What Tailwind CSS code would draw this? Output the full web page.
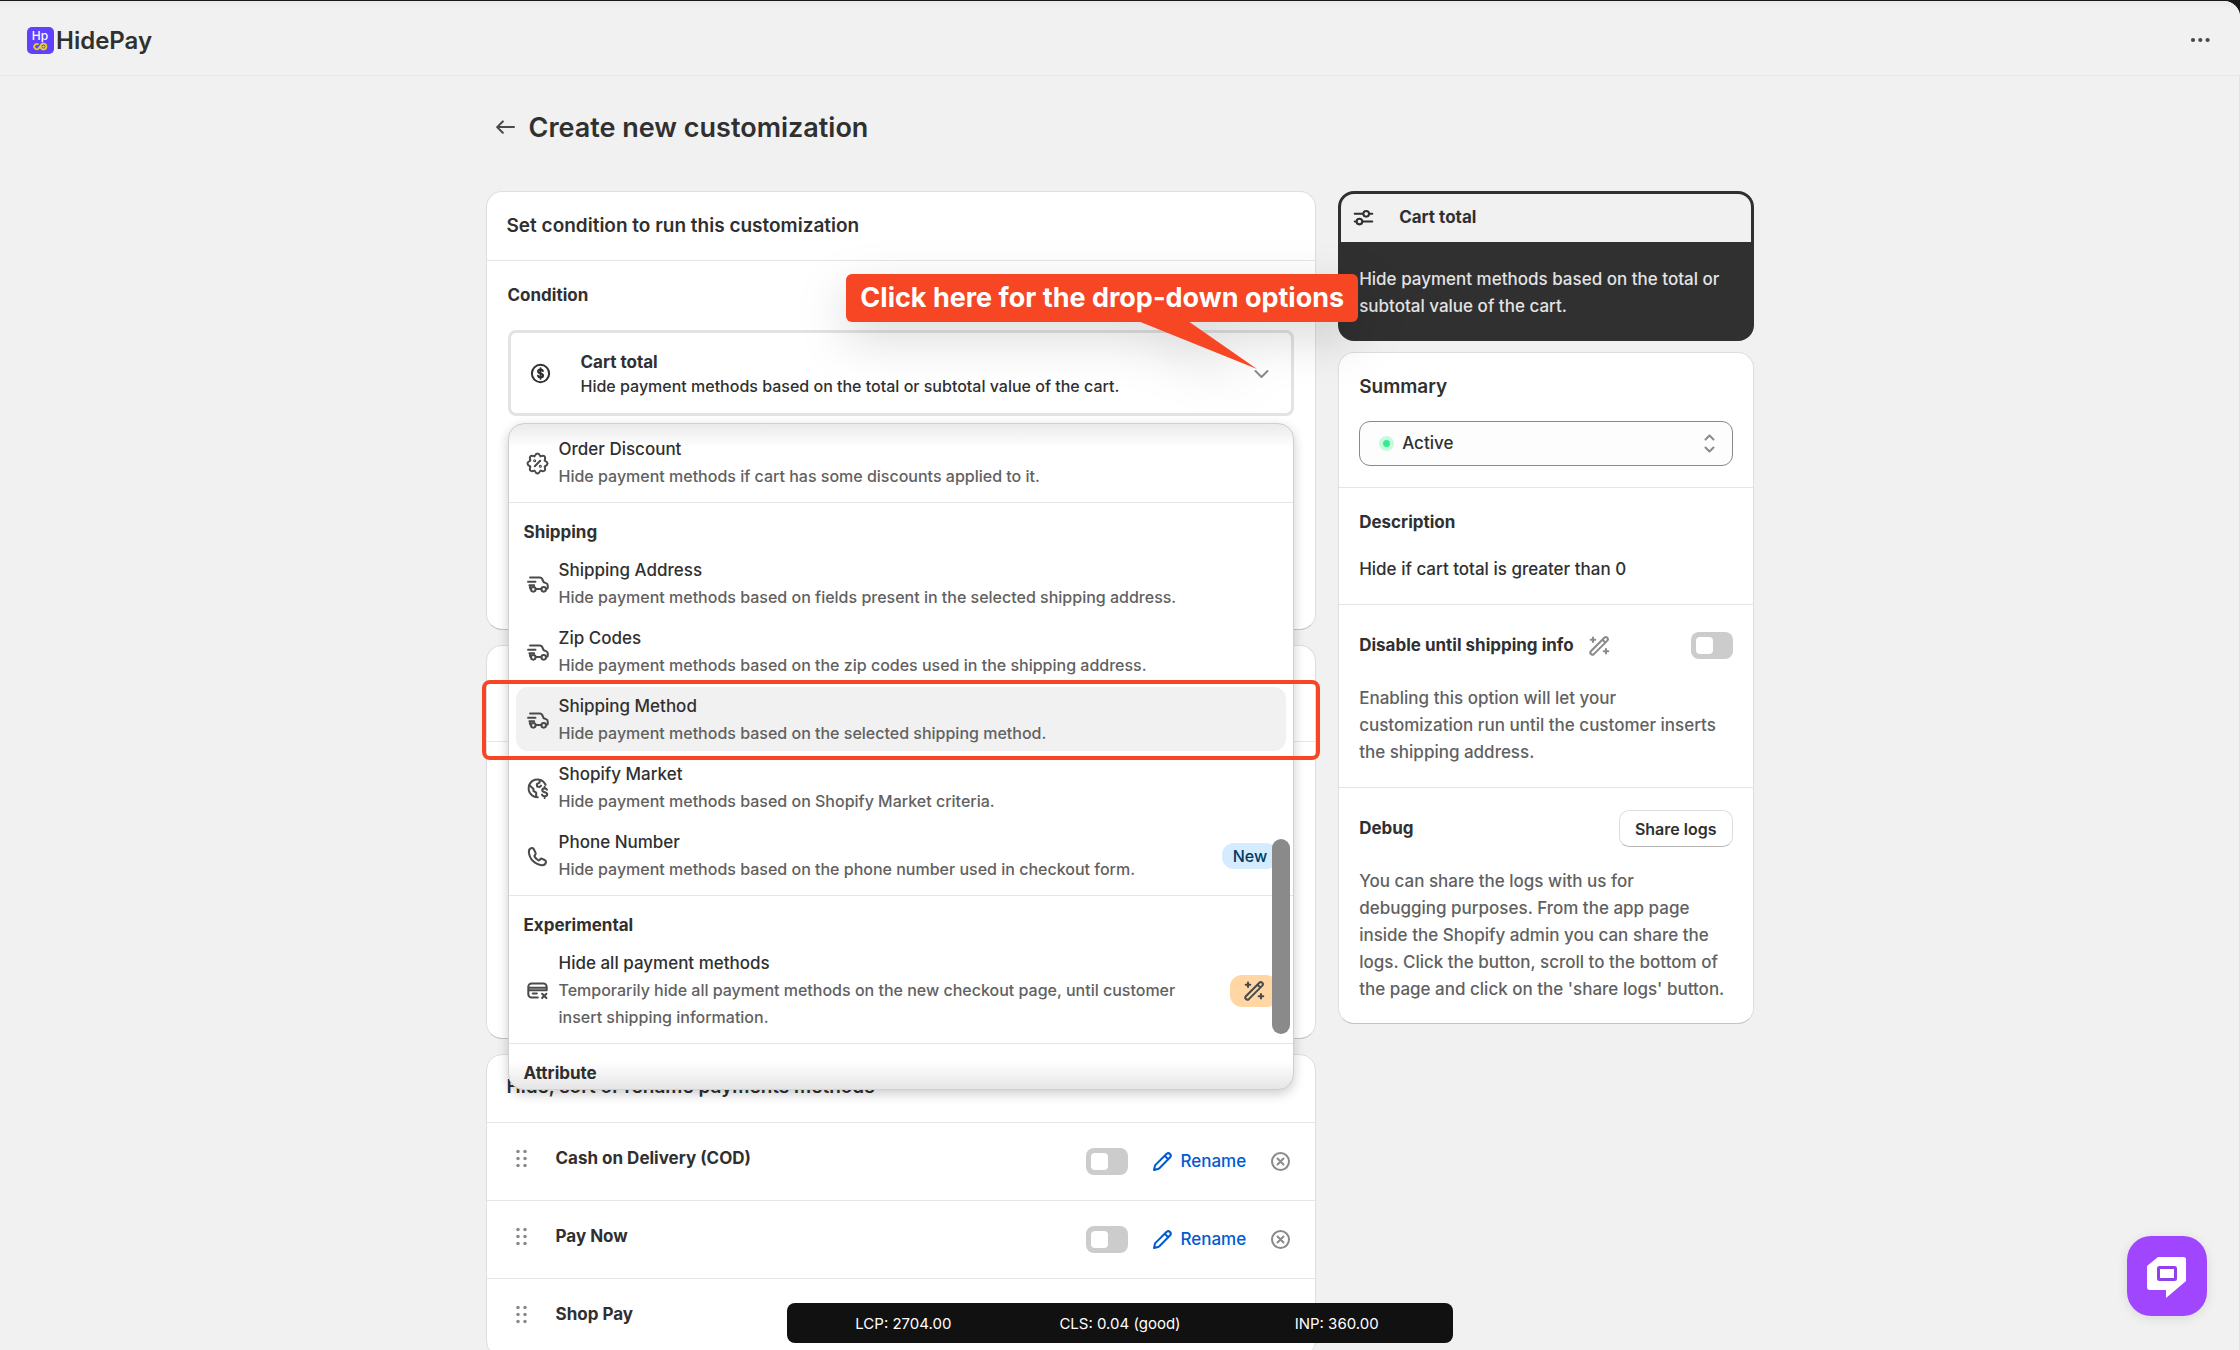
<!DOCTYPE html>
<html lang="en">
<head>
    <meta charset="UTF-8">
    <meta name="viewport" content="width=device-width, initial-scale=1.0">
    <title>HidePay - Create new customization</title>
    <script src="https://cdn.jsdelivr.net/npm/@tailwindcss/browser@4"></script>
</head>
<body class="bg-[#1a1a1a] font-['Inter',sans-serif] text-[#303030] text-[17px] leading-[27px] font-medium">
    <!-- shared icons -->
    <svg class="hidden" fill="none">
        <symbol id="i-truck" viewBox="0 0 20 20"><g fill="none" stroke="currentColor" stroke-width="1.5" stroke-linecap="round" stroke-linejoin="round"><path d="M4.5 4.75h7.3c.7 0 1.3.4 1.6 1l1.2 2.6 1.7.6c.8.3 1.3 1 1.3 1.8v1.2c0 .8-.5 1.3-1.2 1.3M3 7.9h5.5M4 10.6h3.5M4.4 10.8v1.5c0 .6.3 1 .7 1M8.6 13.4h4.3"/><circle cx="6.9" cy="13.6" r="1.7"/><circle cx="14.6" cy="13.6" r="1.7"/></g></symbol>
        <symbol id="i-wand" viewBox="0 0 20 20"><g fill="none" stroke="currentColor" stroke-width="1.5" stroke-linecap="round" stroke-linejoin="round"><path d="M3.6 14.2 13.6 4.2a1.56 1.56 0 0 1 2.2 2.2L5.8 16.4a1.56 1.56 0 0 1-2.2-2.2ZM12.2 5.7l2.1 2.1"/><path d="M5.2 4v3.4M3.5 5.7h3.4M14.8 12.6V16M13.1 14.3h3.4"/></g></symbol>
        <symbol id="i-pencil" viewBox="0 0 20 20"><g fill="none" stroke="currentColor" stroke-width="1.5" stroke-linecap="round" stroke-linejoin="round"><path d="M13.1 4.3a1.85 1.85 0 0 1 2.6 2.6l-8 8.1c-.3.3-.6.4-1 .5l-3 .8.7-3c.1-.4.3-.7.6-1ZM11.6 5.8l2.6 2.6"/></g></symbol>
        <symbol id="i-remove" viewBox="0 0 20 20"><g fill="none" stroke="currentColor" stroke-width="1.5" stroke-linecap="round"><circle cx="10" cy="10" r="6.3"/><path d="m7.8 7.8 4.4 4.4M12.2 7.8l-4.4 4.4"/></g></symbol>
        <symbol id="i-drag" viewBox="0 0 20 20"><g fill="currentColor"><circle cx="7.4" cy="4.8" r="1.3"/><circle cx="12.6" cy="4.8" r="1.3"/><circle cx="7.4" cy="10" r="1.3"/><circle cx="12.6" cy="10" r="1.3"/><circle cx="7.4" cy="15.2" r="1.3"/><circle cx="12.6" cy="15.2" r="1.3"/></g></symbol>
    </svg>

    <div class="mt-px flex h-[calc(100vh-1px)] flex-col overflow-hidden rounded-tr-2xl bg-[#f1f1f1]">
        <header class="flex h-[75px] shrink-0 items-center justify-between border-b border-[#e8e8e8] bg-linear-to-b from-[#ebe9ea] to-[#f1f1f1] to-10% pl-[27px] pr-[26px] pt-[5px]">
            <div class="flex items-center gap-[2px]">
                <svg class="size-[27px]" viewBox="0 0 27 27">
                    <rect width="27" height="27" rx="5" fill="#5f41ff"/>
                    <text x="13" y="13" text-anchor="middle" font-family="Inter, sans-serif" font-size="12" font-weight="500" fill="#fff">Hp</text>
                    <g fill="none" stroke="#e8cf2e" stroke-width="1.8"><path d="M11.500 17.600a2.600 2.600 0 1 0 0 4l2.500-3.400"/><circle cx="16.500" cy="19.600" r="2.900"/></g>
                    <circle cx="16.500" cy="19.600" r="1.200" fill="#e8cf2e"/>
                </svg>
                <span class="text-2xl font-semibold">HidePay</span>
            </div>
            <button type="button" aria-label="More actions" class="text-[#4a4a4a]">
                <svg class="size-[27px]" viewBox="0 0 27 27" fill="currentColor"><circle cx="6" cy="13" r="2.1"/><circle cx="13.3" cy="13" r="2.1"/><circle cx="20.6" cy="13" r="2.1"/></svg>
            </button>
        </header>

        <main class="grow border-r border-[#e3e3e3] pt-8">
            <div class="mx-auto max-w-[1268px]">
                <div class="mb-[45px] flex h-[38px] items-center gap-2.5 pl-1.5">
                    <a href="#" aria-label="Back" class="text-[#4a4a4a]">
                        <svg class="size-[27px]" viewBox="0 0 20 20" fill="none" stroke="currentColor" stroke-width="1.5" stroke-linecap="round" stroke-linejoin="round"><path d="M16.3 9.7H4M8 5.5 3.8 9.7 8 13.9"/></svg>
                    </a>
                    <h1 class="text-[27px] font-semibold">Create new customization</h1>
                </div>

                <div class="grid grid-cols-[2fr_1fr] items-start gap-[22px]">
                    <div class="flex flex-col gap-[15px]">
                        <!-- condition -->
                        <section class="min-h-[439px] rounded-2xl border border-[#dedede] border-b-[#c4c4c4] bg-white">
                            <h2 class="flex h-[69px] items-center border-b border-[#e6e6e6] px-5 pb-[2px] text-[19px] font-semibold">Set condition to run this customization</h2>
                            <div class="px-[21px] py-[21px]">
                                <h3 class="mb-[21px] font-bold">Condition</h3>
                                <div class="relative">
                                    <button type="button" aria-haspopup="listbox" aria-expanded="true" class="flex h-[86px] w-full items-center rounded-lg border-3 border-[#e3e3e3] bg-white pl-4 pr-[16px] text-left">
                                        <svg class="size-[27px]" viewBox="0 0 20 20" fill="none" stroke="currentColor" stroke-width="1.5" stroke-linecap="round" stroke-linejoin="round"><circle cx="10" cy="10" r="6.4"/><path d="M11.8 8.2c-.2-.7-.9-1.1-1.8-1.1-1 0-1.8.5-1.8 1.4 0 2 3.7.9 3.7 2.9 0 .9-.8 1.5-1.9 1.5-1 0-1.7-.5-1.9-1.3M10 6.2v7.6"/></svg>
                                        <span class="ml-[27px] flex grow flex-col pt-[2px]">
                                            <span class="leading-6 font-bold">Cart total</span>
                                            <span class="text-base leading-6">Hide payment methods based on the total or subtotal value of the cart.</span>
                                        </span>
                                        <svg class="size-[27px] text-[#8a8a8a]" viewBox="0 0 27 27" fill="none" stroke="currentColor" stroke-width="2" stroke-linecap="round" stroke-linejoin="round"><path d="m7.5 11 6 6 6-6"/></svg>
                                    </button>

                                    <div class="absolute inset-x-0 top-[93px] z-10">
                                        <div role="listbox" aria-label="Condition" class="h-[667px] overflow-hidden rounded-2xl border border-[#cfcfcf] bg-white shadow-[0_4px_12px_rgba(0,0,0,0.2)]">
                                            <div class="border-b border-[#e6e6e6] px-[7px] pt-1.5 pb-2">
                                                <div role="option" class="flex min-h-16 items-center gap-2 rounded-xl px-2 pt-1.5 pb-1">
                                                    <svg class="size-[27px] shrink-0 text-[#4a4a4a]" viewBox="0 0 20 20" fill="none" stroke="currentColor" stroke-width="1.5" stroke-linecap="round" stroke-linejoin="round"><path d="M15.3 7.8Q19.600 10 15.3 12.2 16.8 16.8 12.2 15.3 10 19.600 7.8 15.3 3.2 16.8 4.700 12.2 .4 10 4.700 7.8 3.2 3.2 7.8 4.700 10 .4 12.2 4.700 16.8 3.2 15.3 7.8Z"/><path d="m8 12 4-4"/><circle cx="7.9" cy="8" r=".4"/><circle cx="12.1" cy="12" r=".4"/></svg>
                                                    <div>
                                                        <p>Order Discount</p>
                                                        <p class="text-base leading-[27px] text-[#616161]">Hide payment methods if cart has some discounts applied to it.</p>
                                                    </div>
                                                </div>
                                            </div>
                                            <div class="flex flex-col gap-1 border-b border-[#e6e6e6] px-[7px] pt-4 pb-2">
                                                <h4 class="mb-px px-2 font-bold">Shipping</h4>
                                                <div role="option" class="flex min-h-16 items-center gap-2 rounded-xl px-2 pt-1.5 pb-1">
                                                    <svg class="size-[27px] shrink-0 text-[#4a4a4a]"><use href="#i-truck"/></svg>
                                                    <div>
                                                        <p>Shipping Address</p>
                                                        <p class="text-base leading-[27px] text-[#616161]">Hide payment methods based on fields present in the selected shipping address.</p>
                                                    </div>
                                                </div>
                                                <div role="option" class="flex min-h-16 items-center gap-2 rounded-xl px-2 pt-1.5 pb-1">
                                                    <svg class="size-[27px] shrink-0 text-[#4a4a4a]"><use href="#i-truck"/></svg>
                                                    <div>
                                                        <p>Zip Codes</p>
                                                        <p class="text-base leading-[27px] text-[#616161]">Hide payment methods based on the zip codes used in the shipping address.</p>
                                                    </div>
                                                </div>
                                                <div role="option" aria-selected="true" class="flex min-h-16 items-center gap-2 rounded-xl bg-[#f1f1f1] px-2 pt-1.5 pb-1">
                                                    <svg class="size-[27px] shrink-0 text-[#4a4a4a]"><use href="#i-truck"/></svg>
                                                    <div>
                                                        <p>Shipping Method</p>
                                                        <p class="text-base leading-[27px] text-[#616161]">Hide payment methods based on the selected shipping method.</p>
                                                    </div>
                                                </div>
                                                <div role="option" class="flex min-h-16 items-center gap-2 rounded-xl px-2 pt-1.5 pb-1">
                                                    <svg class="size-[27px] shrink-0 text-[#4a4a4a]" viewBox="0 0 20 20" fill="none" stroke="currentColor" stroke-width="1.5" stroke-linecap="round" stroke-linejoin="round"><path d="M10.2 16.5A6.6 6.6 0 1 1 16 7.2"/><path d="M4 7.5l3 2.9v1.4l2 1.3v3.2M11.8 3.8l-.3 1.8-2 1.2.2 1.8 1.8.3 1.1-1"/><path d="M17 10.9c-.3-.7-.9-1-1.7-1-1 0-1.8.5-1.8 1.4 0 2 3.7.9 3.7 2.9 0 .9-.8 1.5-1.9 1.5-1 0-1.7-.4-2-1.2M15.3 8.8v1M15.3 15.800v1.2"/></svg>
                                                    <div>
                                                        <p>Shopify Market</p>
                                                        <p class="text-base leading-[27px] text-[#616161]">Hide payment methods based on Shopify Market criteria.</p>
                                                    </div>
                                                </div>
                                                <div role="option" class="flex min-h-16 items-center gap-2 rounded-xl px-2 pt-1.5 pb-1">
                                                    <svg class="size-[27px] shrink-0 text-[#4a4a4a]" viewBox="0 0 20 20" fill="none" stroke="currentColor" stroke-width="1.5" stroke-linecap="round" stroke-linejoin="round"><path d="M7.2 4.4c-.3-.6-.9-.8-1.5-.7-1.4.3-2.2 1.5-2.1 3 .4 5.2 4.6 9.4 9.8 9.7 1.4.1 2.6-.8 2.9-2.1.1-.6-.2-1.2-.7-1.5l-2-1c-.5-.3-1.2-.2-1.6.3l-.5.5c-.3.3-.7.4-1 .2-1.1-.7-2-1.6-2.7-2.7-.2-.3-.1-.7.2-1l.3-.4c.4-.4.5-1 .2-1.6Z"/></svg>
                                                    <div class="grow">
                                                        <p>Phone Number</p>
                                                        <p class="text-base leading-[27px] text-[#616161]">Hide payment methods based on the phone number used in checkout form.</p>
                                                    </div>
                                                    <span class="rounded-xl bg-[#d5ebff] px-[11px] text-base leading-[26px] text-[#003a5a]">New</span>
                                                </div>
                                            </div>
                                            <div class="flex flex-col gap-1 border-b border-[#e6e6e6] px-[7px] pt-4 pb-2">
                                                <h4 class="mb-px px-2 font-bold">Experimental</h4>
                                                <div role="option" class="flex min-h-16 items-center gap-2 rounded-xl px-2 pt-1.5 pb-1">
                                                    <svg class="size-[27px] shrink-0 text-[#4a4a4a]" viewBox="0 0 20 20" fill="none" stroke="currentColor" stroke-width="1.5" stroke-linecap="round" stroke-linejoin="round"><path d="M10.2 15.25H5.6a2.4 2.4 0 0 1-2.4-2.4V7.15a2.4 2.4 0 0 1 2.4-2.4h8.8a2.4 2.4 0 0 1 2.4 2.4v2.6H3.4M3.4 7.9h13.2M6.5 12.3h3"/><path d="m13.4 12.4 3.2 3.2M16.6 12.4l-3.2 3.2"/></svg>
                                                    <div class="grow">
                                                        <p>Hide all payment methods</p>
                                                        <p class="max-w-[640px] text-base leading-[27px] text-[#616161]">Temporarily hide all payment methods on the new checkout page, until customer insert shipping information.</p>
                                                    </div>
                                                    <span class="flex h-8 w-12 items-center justify-center rounded-xl bg-[#ffd6a4] text-[#4a4a4a]"><svg class="size-[27px]"><use href="#i-wand"/></svg></span>
                                                </div>
                                            </div>
                                            <div class="px-[7px] pt-4">
                                                <h4 class="px-2 font-bold">Attribute</h4>
                                            </div>
                                        </div>
                                        <!-- scroll shadows and thumb -->
                                        <div class="pointer-events-none absolute inset-x-px top-px h-6 rounded-t-[15px] bg-linear-to-b from-black/8 to-transparent"></div>
                                        <div class="pointer-events-none absolute inset-x-px bottom-px h-7 rounded-b-[15px] bg-linear-to-t from-black/10 to-transparent"></div>
                                        <div class="absolute top-[416px] right-1 h-[195px] w-[18px] rounded-full bg-[#8a8a8a]"></div>
                                        <!-- highlight frame -->
                                        <div class="pointer-events-none absolute -inset-x-[26px] top-[257px] h-[80px] rounded-lg border-4 border-[#f64623]"></div>
                                    </div>

                                    <!-- callout -->
                                    <div class="absolute -top-14 -right-16 z-20 drop-shadow-[0_16px_24px_rgba(0,0,0,0.15)]">
                                        <p class="rounded-md bg-[#f64623] px-[14px] text-[27px] leading-12 font-bold whitespace-nowrap text-white">Click here for the drop-down options</p>
                                        <svg class="absolute top-[47px] right-[100px] h-[50px] w-[120px]" viewBox="0 0 120 50"><path d="M0 0h50l69 48Z" fill="#f64623"/></svg>
                                    </div>
                                </div>
                            </div>
                        </section>

                        <section class="min-h-[394px] rounded-2xl border border-[#dedede] border-b-[#c4c4c4] bg-white">
                            <div class="h-24 border-b border-[#e6e6e6]"></div>
                        </section>

                        <!-- payment methods -->
                        <section class="rounded-2xl border border-[#dedede] bg-white">
                            <h2 class="flex h-[67px] items-center px-5 pb-1 text-[19px] font-semibold">Hide, sort or rename payments methods</h2>
                            <ul>
                                <li class="flex h-[78px] items-center border-t border-[#e6e6e6] px-[21px]">
                                    <svg class="mb-1.5 size-[27px] text-[#8a8a8a]"><use href="#i-drag"/></svg>
                                    <label for="cod" class="mb-1.5 ml-[21px] grow font-bold">Cash on Delivery (COD)</label>
                                    <input id="cod" type="checkbox" class="h-[27px] w-[42px] appearance-none rounded-lg bg-[#cccccc] p-[5px] before:block before:size-[17px] before:rounded-sm before:bg-white checked:bg-[#303030]">
                                    <button type="button" class="ml-[21px] flex items-center gap-1 text-[#005bd3]"><svg class="size-[27px]"><use href="#i-pencil"/></svg>Rename</button>
                                    <button type="button" aria-label="Remove" class="ml-[21px] text-[#8a8a8a]"><svg class="size-[27px]"><use href="#i-remove"/></svg></button>
                                </li>
                                <li class="flex h-[78px] items-center border-t border-[#e6e6e6] px-[21px]">
                                    <svg class="mb-1.5 size-[27px] text-[#8a8a8a]"><use href="#i-drag"/></svg>
                                    <label for="paynow" class="mb-1.5 ml-[21px] grow font-bold">Pay Now</label>
                                    <input id="paynow" type="checkbox" class="h-[27px] w-[42px] appearance-none rounded-lg bg-[#cccccc] p-[5px] before:block before:size-[17px] before:rounded-sm before:bg-white checked:bg-[#303030]">
                                    <button type="button" class="ml-[21px] flex items-center gap-1 text-[#005bd3]"><svg class="size-[27px]"><use href="#i-pencil"/></svg>Rename</button>
                                    <button type="button" aria-label="Remove" class="ml-[21px] text-[#8a8a8a]"><svg class="size-[27px]"><use href="#i-remove"/></svg></button>
                                </li>
                                <li class="flex h-[78px] items-center border-t border-[#e6e6e6] px-[21px]">
                                    <svg class="mb-1.5 size-[27px] text-[#8a8a8a]"><use href="#i-drag"/></svg>
                                    <span class="mb-1.5 ml-[21px] grow font-bold">Shop Pay</span>
                                </li>
                            </ul>
                        </section>
                    </div>

                    <aside class="flex flex-col gap-[11px]">
                        <section class="overflow-hidden rounded-2xl border-3 border-[#303030] bg-[#303030]">
                            <h2 class="flex h-12 items-center gap-[22px] bg-[#f1f1f1] pb-px pl-[9px] font-bold">
                                <svg class="size-[27px]" viewBox="0 0 20 20" fill="none" stroke="currentColor" stroke-width="1.5" stroke-linecap="round" stroke-linejoin="round"><path d="M3.5 7.3h6.2M14.3 7.3h2.2M3.5 13h1.2M9.3 13h7.2"/><circle cx="12" cy="7.3" r="2.1"/><circle cx="7" cy="13" r="2.1"/></svg>
                                Cart total
                            </h2>
                            <p class="px-[18px] pt-6 pb-[18px] text-[#e3e3e3]">Hide payment methods based on the total or<br>subtotal value of the cart.</p>
                        </section>

                        <section class="rounded-2xl border border-[#dedede] border-b-[#c4c4c4] bg-white">
                            <div class="px-5 pt-5 pb-[21px]">
                                <h2 class="mb-[21px] text-[19px] font-semibold"><label for="status">Summary</label></h2>
                                <div class="relative">
                                    <select id="status" class="h-[45px] w-full appearance-none rounded-[11px] border border-[#8a8a8a] bg-[#fdfdfd] pl-[42px] text-[#303030]">
                                        <option selected>Active</option>
                                        <option>Inactive</option>
                                    </select>
                                    <span class="pointer-events-none absolute top-[15px] left-5 size-[15px] rounded-full border-4 border-[#c5fbdc] bg-[#36ea92]"></span>
                                    <svg class="pointer-events-none absolute top-[9px] right-[10px] size-[27px] text-[#8a8a8a]" viewBox="0 0 27 27" fill="none" stroke="currentColor" stroke-width="2" stroke-linecap="round" stroke-linejoin="round"><path d="m9.500 9.500 4-4 4 4M9.500 17.500l4 4 4-4"/></svg>
                                </div>
                            </div>
                            <div class="border-t border-[#e6e6e6] px-5 py-[21px]">
                                <h3 class="mb-5 font-bold">Description</h3>
                                <p>Hide if cart total is greater than 0</p>
                            </div>
                            <div class="border-t border-[#e6e6e6] px-5 pt-[27px] pb-[21px]">
                                <div class="mb-[26px] flex items-center">
                                    <label for="disable" class="font-bold">Disable until shipping info</label>
                                    <svg class="ml-3 size-[27px] text-[#8a8a8a]"><use href="#i-wand"/></svg>
                                    <input id="disable" type="checkbox" class="ml-auto h-[27px] w-[42px] appearance-none rounded-lg bg-[#cccccc] p-[5px] before:block before:size-[17px] before:rounded-sm before:bg-white checked:bg-[#303030]">
                                </div>
                                <p class="text-[#616161]">Enabling this option will let your<br>customization run until the customer inserts<br>the shipping address.</p>
                            </div>
                            <div class="border-t border-[#e6e6e6] px-5 pt-[22px] pb-5">
                                <div class="mb-[21px] flex items-center justify-between">
                                    <h3 class="font-bold">Debug</h3>
                                    <button type="button" class="h-[37px] rounded-[10px] border border-[#dedede] border-b-[#b5b5b5] bg-white px-[15px] text-base font-semibold">Share logs</button>
                                </div>
                                <p class="text-[#616161]">You can share the logs with us for<br>debugging purposes. From the app page<br>inside the Shopify admin you can share the<br>logs. Click the button, scroll to the bottom of<br>the page and click on the 'share logs' button.</p>
                            </div>
                        </section>
                    </aside>
                </div>
            </div>
        </main>
    </div>

    <!-- web vitals bar -->
    <div class="fixed bottom-[7px] left-1/2 z-30 grid h-10 w-[666px] -translate-x-1/2 grid-cols-3 items-center rounded-lg bg-[#111111] px-2 text-center text-[15px] font-normal text-white">
        <span>LCP: 2704.00</span>
        <span>CLS: 0.04 (good)</span>
        <span>INP: 360.00</span>
    </div>

    <button type="button" aria-label="Open chat" class="fixed right-[33px] bottom-[34px] z-30 size-20 rounded-3xl bg-[#a146ff] shadow-[0_2px_12px_rgba(0,0,0,0.1)]">
        <svg class="size-20" viewBox="0 0 80 80"><path d="M31 21h25.5a2.5 2.5 0 0 1 2.5 2.5V45L39 62v-8H23a3 3 0 0 1-3-3V30Z" fill="#fff"/><rect x="31.5" y="31.5" width="17" height="12" rx="1" fill="#fff" stroke="#9140ee" stroke-width="3"/></svg>
    </button>
</body>
</html>
